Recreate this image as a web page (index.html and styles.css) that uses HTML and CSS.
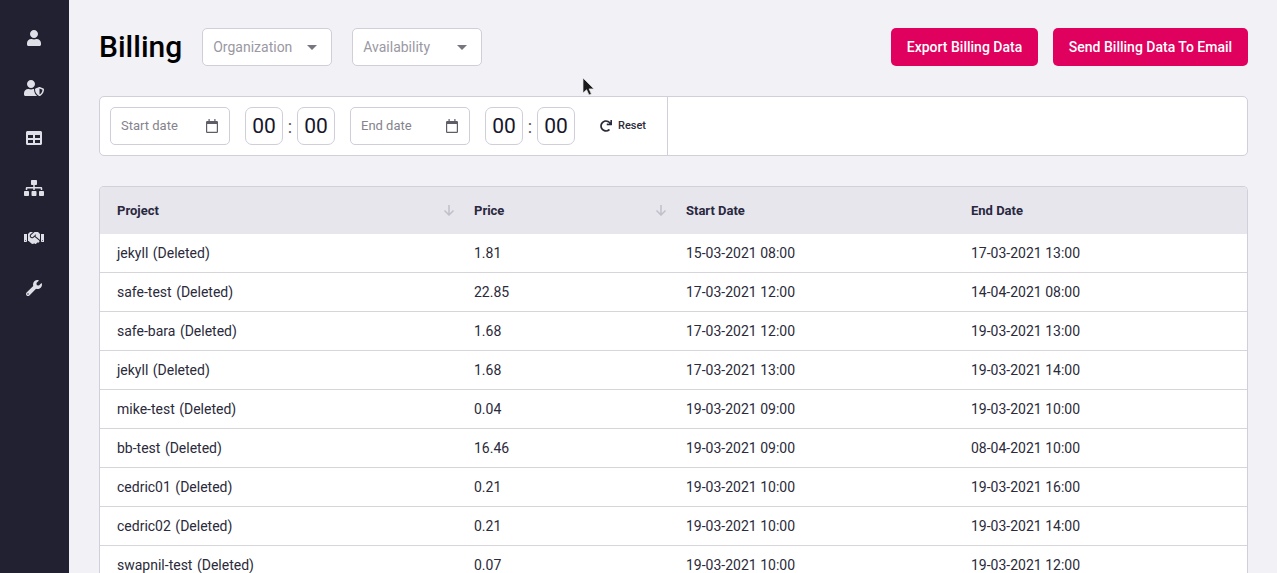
FILE: index.html

```html
<!DOCTYPE html>
<html>
  <head>
    <title>Billing</title>
    <link rel="stylesheet" href="styles.css">
  </head>
  <body>
    <div class="app">
      <nav class="sidebar">
        <a class="nav-item"><svg class="icon-user" viewBox="0 0 448 512"><path d="M224 256c70.7 0 128-57.3 128-128S294.7 0 224 0 96 57.3 96 128s57.3 128 128 128zm89.6 32h-16.7c-22.2 10.2-46.9 16-72.9 16s-50.6-5.8-72.9-16h-16.7C60.2 288 0 348.2 0 422.4V464c0 26.5 21.5 48 48 48h352c26.5 0 48-21.5 48-48v-41.6c0-74.2-60.2-134.4-134.4-134.4z"/></svg></a>
        <a class="nav-item"><svg class="icon-wide" viewBox="0 0 640 512"><path d="M622.3 271.1l-115.2-45c-4.1-1.6-12.6-3.7-22.2 0l-115.2 45c-10.7 4.2-17.7 14-17.7 24.9 0 111.6 68.7 188.8 132.9 213.9 9.6 3.7 18 1.6 22.2 0C558.4 489.9 640 420.5 640 296c0-10.9-7-20.7-17.7-24.9zM496 462.4V273.3l95.5 37.3c-5.6 87.1-60.9 135.4-95.5 151.8zM224 256c70.7 0 128-57.3 128-128S294.7 0 224 0 96 57.3 96 128s57.3 128 128 128zm96 40c0-2.5.8-4.8 1.1-7.2-2.5-.1-4.9-.8-7.5-.8h-16.7c-22.2 10.2-46.9 16-72.9 16s-50.6-5.8-72.9-16h-16.7C60.2 288 0 348.2 0 422.4V464c0 26.5 21.5 48 48 48h352c6.8 0 13.3-1.5 19.2-4-54-42.9-99.2-116.7-99.2-212z"/></svg></a>
        <a class="nav-item"><svg class="icon-square" viewBox="0 0 512 512"><path d="M464 32H48C21.49 32 0 53.49 0 80v352c0 26.51 21.49 48 48 48h416c26.51 0 48-21.49 48-48V80c0-26.51-21.49-48-48-48zM224 416H64v-96h160v96zm0-160H64v-96h160v96zm224 160H288v-96h160v96zm0-160H288v-96h160v96z"/></svg></a>
        <a class="nav-item"><svg class="icon-wide" viewBox="0 0 640 512"><path d="M128 352H32c-17.67 0-32 14.33-32 32v96c0 17.67 14.33 32 32 32h96c17.67 0 32-14.33 32-32v-96c0-17.67-14.33-32-32-32zm-24-80h192v48h48v-48h192v48h48v-57.59c0-21.17-17.23-38.41-38.41-38.41H344v-64h40c17.67 0 32-14.33 32-32V32c0-17.67-14.33-32-32-32H256c-17.67 0-32 14.33-32 32v96c0 17.67 14.33 32 32 32h40v64H94.41C73.23 224 56 241.23 56 262.41V320h48v-48zm264 80h-96c-17.67 0-32 14.33-32 32v96c0 17.67 14.33 32 32 32h96c17.67 0 32-14.33 32-32v-96c0-17.67-14.33-32-32-32zm240 0h-96c-17.67 0-32 14.33-32 32v96c0 17.67 14.33 32 32 32h96c17.67 0 32-14.33 32-32v-96c0-17.67-14.33-32-32-32z"/></svg></a>
        <a class="nav-item"><svg class="icon-wide" viewBox="0 0 640 512"><path d="M434.7 64h-85.9c-8 0-15.7 3-21.6 8.4l-98.3 90c-.1.1-.2.3-.3.4-16.6 15.6-16.3 40.5-2.1 56 12.7 13.9 39.4 17.6 56.1 2.7.1-.1.3-.1.4-.2l79.9-73.2c6.5-5.9 16.7-5.5 22.6 1 6 6.5 5.5 16.6-1 22.6l-26.1 23.9L504 313.8c2.9 2.4 5.5 5 7.9 7.7V128l-54.6-54.6c-5.9-6-14.1-9.4-22.6-9.4zM544 128.2v223.9c0 17.7 14.3 32 32 32h64V128.2h-96zm48 223.9c-8.8 0-16-7.2-16-16s7.2-16 16-16 16 7.2 16 16-7.2 16-16 16zM0 384h64c17.7 0 32-14.3 32-32V128.2H0V384zm48-63.9c8.8 0 16 7.2 16 16s-7.2 16-16 16-16-7.2-16-16c0-8.9 7.2-16 16-16zm435.9 18.6L334.6 217.5l-30 27.5c-29.7 27.1-75.2 24.5-101.7-4.4-26.9-29.4-24.8-74.9 4.4-101.7L289.1 64h-83.8c-8.5 0-16.6 3.4-22.6 9.4L128 128v223.9h18.3l90.5 81.9c27.4 22.3 67.7 18.1 90-9.3l.2-.2 17.9 15.5c15.9 13 39.4 10.5 52.3-5.4l31.4-38.6 5.4 4.4c13.7 11.1 33.9 9.1 45-4.7l9.5-11.7c11.2-13.8 9.1-33.9-4.6-45.1z"/></svg></a>
        <a class="nav-item"><svg class="icon-square" viewBox="0 0 512 512"><path d="M507.73 109.1c-2.24-9.03-13.54-12.09-20.12-5.51l-74.36 74.36-67.88-11.31-11.31-67.88 74.36-74.36c6.62-6.62 3.43-17.9-5.66-20.16-47.38-11.74-99.55.91-136.58 37.93-39.64 39.64-50.55 97.1-34.05 147.2L18.74 402.76c-24.99 24.99-24.99 65.51 0 90.5 24.99 24.99 65.51 24.99 90.5 0l213.21-213.21c50.12 16.71 107.47 5.68 147.37-34.22 37.07-37.07 49.7-89.32 37.91-136.73zM64 472c-13.25 0-24-10.75-24-24 0-13.26 10.75-24 24-24s24 10.74 24 24c0 13.25-10.75 24-24 24z"/></svg></a>
      </nav>

      <main class="content">
        <div class="page-head">
          <h1 class="page-title">Billing</h1>
          <div class="select"><span>Organization</span><i class="caret"></i></div>
          <div class="select"><span>Availability</span><i class="caret"></i></div>
          <div class="actions">
            <button class="btn btn-export">Export Billing Data</button>
            <button class="btn btn-send">Send Billing Data To Email</button>
          </div>
        </div>

        <div class="filters">
          <div class="filters-left">
            <div class="date-input"><span>Start date</span>
              <svg viewBox="0 0 12 14"><path class="fill" d="M2.500 0h1.200v2h4.600V0h1.200v2h1.300A1.200 1.200 0 0 1 12 3.200v9.600a1.200 1.200 0 0 1-1.200 1.200H1.200A1.200 1.200 0 0 1 0 12.800V3.200A1.200 1.200 0 0 1 1.200 2h1.300zM1.200 5v7.800h9.600V5z"/></svg>
            </div>
            <div class="time"><span class="time-box">00</span><span class="colon">:</span><span class="time-box">00</span></div>
            <div class="date-input"><span>End date</span>
              <svg viewBox="0 0 12 14"><path class="fill" d="M2.500 0h1.200v2h4.600V0h1.200v2h1.300A1.200 1.200 0 0 1 12 3.200v9.600a1.200 1.200 0 0 1-1.200 1.200H1.200A1.200 1.200 0 0 1 0 12.800V3.200A1.200 1.200 0 0 1 1.200 2h1.300zM1.200 5v7.800h9.600V5z"/></svg>
            </div>
            <div class="time"><span class="time-box">00</span><span class="colon">:</span><span class="time-box">00</span></div>
            <a class="reset">
              <svg viewBox="0 0 512 512"><path d="M500.33 0h-47.41a12 12 0 0 0-12 12.57l4 82.76A247.42 247.42 0 0 0 256 8C119.34 8 7.900 119.530 8 256.190 8.100 393.070 119.100 504 256 504a247.100 247.100 0 0 0 166.180-63.910 12 12 0 0 0 .48-17.430l-34-34a12 12 0 0 0-16.380-.55A176 176 0 1 1 402.100 157.800l-101.530-4.870a12 12 0 0 0-12.570 12v47.410a12 12 0 0 0 12 12h200.330a12 12 0 0 0 12-12V12a12 12 0 0 0-12-12z"/></svg>
              <span>Reset</span>
            </a>
          </div>
        </div>

        <div class="table-wrap">
          <table class="billing">
            <colgroup><col class="col-project"><col class="col-price"><col class="col-start"><col></colgroup>
            <thead>
              <tr>
                <th>Project<svg class="sort" viewBox="0 0 12 12"><path d="M6 1v10M1.500 6.500 6 11l4.500-4.500"/></svg></th>
                <th>Price<svg class="sort" viewBox="0 0 12 12"><path d="M6 1v10M1.500 6.500 6 11l4.500-4.500"/></svg></th>
                <th>Start Date</th>
                <th>End Date</th>
              </tr>
            </thead>
            <tbody>
              <tr><td>jekyll <span class="tag">(Deleted)</span></td><td>1.81</td><td>15-03-2021 08:00</td><td>17-03-2021 13:00</td></tr>
              <tr><td>safe-test <span class="tag">(Deleted)</span></td><td>22.85</td><td>17-03-2021 12:00</td><td>14-04-2021 08:00</td></tr>
              <tr><td>safe-bara <span class="tag">(Deleted)</span></td><td>1.68</td><td>17-03-2021 12:00</td><td>19-03-2021 13:00</td></tr>
              <tr><td>jekyll <span class="tag">(Deleted)</span></td><td>1.68</td><td>17-03-2021 13:00</td><td>19-03-2021 14:00</td></tr>
              <tr><td>mike-test <span class="tag">(Deleted)</span></td><td>0.04</td><td>19-03-2021 09:00</td><td>19-03-2021 10:00</td></tr>
              <tr><td>bb-test <span class="tag">(Deleted)</span></td><td>16.46</td><td>19-03-2021 09:00</td><td>08-04-2021 10:00</td></tr>
              <tr><td>cedric01 <span class="tag">(Deleted)</span></td><td>0.21</td><td>19-03-2021 10:00</td><td>19-03-2021 16:00</td></tr>
              <tr><td>cedric02 <span class="tag">(Deleted)</span></td><td>0.21</td><td>19-03-2021 10:00</td><td>19-03-2021 14:00</td></tr>
              <tr><td>swapnil-test <span class="tag">(Deleted)</span></td><td>0.07</td><td>19-03-2021 10:00</td><td>19-03-2021 12:00</td></tr>
            </tbody>
          </table>
        </div>
      </main>
    </div>
    <svg class="cursor" viewBox="0 0 13 20"><path d="M1 1v15l3.600-3.300L7 18l2.400-1-2.300-5.100H12z"/></svg>
  </body>
</html>
```

FILE: styles.css

```css
* {box-sizing: border-box;}
html, body {margin: 0; height: 100%; overflow: hidden;}
body {font-family: Roboto, "Liberation Sans", sans-serif; font-size: 14px; color: #2b2a3a; background: #f1f1f6;}

.app {display: flex; height: 573px; overflow: hidden;}

/* sidebar */
.sidebar {width: 69px; flex: none; background: #212132; padding: 13px 1px 0 0;}
.nav-item {display: flex; align-items: center; justify-content: center; height: 50px;}
.nav-item svg {fill: #dfdfe7; height: 16px;}
.icon-user {width: 14px;}
.icon-wide {width: 20px;}
.icon-square {width: 16px;}

.content {flex: 1; min-width: 0; padding: 28px 29px 0 30px;}

/* top row */
.page-head {display: flex; align-items: center; gap: 20px; height: 38px;}
.page-title {margin: 0; font-size: 30px; font-weight: 500; color: #000; line-height: 38px;}
.select {display: flex; align-items: center; justify-content: space-between; width: 130px; height: 38px; padding: 0 14px 0 10px;
  background: #fff; border: 1px solid #cfced9; border-radius: 5px; color: #9a98a3; font-size: 14px;}
.caret {width: 0; height: 0; border-left: 5px solid transparent; border-right: 5px solid transparent; border-top: 5px solid #77757f;}
.actions {display: flex; gap: 15px; margin-left: auto;}
.btn {height: 38px; padding: 0; border: none; border-radius: 5px; background: #e0005e; color: #fff;
  font-family: inherit; font-size: 14px; font-weight: 500;}
.btn-export {width: 147px;}
.btn-send {width: 195px;}

/* date filters */
.filters {height: 60px; margin-top: 30px; background: #fff; border: 1px solid #d0cfda; border-radius: 5px;}
.filters-left {display: flex; align-items: center; gap: 15px; width: 568px; height: 100%; padding-left: 10px; border-right: 1px solid #d0cfda;}
.date-input {display: flex; align-items: center; justify-content: space-between; width: 120px; height: 38px; padding: 0 11px 0 10px;
  border: 1px solid #cfced9; border-radius: 5px; font-size: 13px; color: #85838d;}
.date-input span {padding-bottom: 2px;}
.date-input svg {width: 12px; height: 14px; margin-bottom: 1px; fill: #5f5d68;}
.time {display: flex; align-items: center;}
.time-box {width: 38px; height: 38px; line-height: 36px; text-align: center; border: 1px solid #cfced9; border-radius: 7px;
  font-size: 21px; color: #17162a;}
.colon {width: 14px; text-align: center; font-size: 18px; color: #55535e;}
.reset {display: flex; align-items: center; gap: 6px; margin-left: 10px; font-size: 11px; font-weight: 500; color: #2b2a3a;}
.reset span {padding-bottom: 2px;}
.reset svg {width: 12px; height: 12px; fill: #2b2a3a;}

/* table */
.table-wrap {margin-top: 30px; background: #fff; border: 1px solid #d0cfda; border-bottom: none; border-radius: 5px 5px 0 0; overflow: hidden;}
.billing {width: 100%; table-layout: fixed; border-collapse: collapse;}
.col-project {width: 357px;}
.col-price {width: 212px;}
.col-start {width: 285px;}
.billing th {position: relative; height: 47px; padding: 0 0 0 17px; text-align: left; font-size: 13px; font-weight: 700; color: #2a2840; background: #e7e6ec;}
.billing td {height: 39px; padding: 0 0 0 17px; border-top: 1px solid #d6d6da; color: #2b2a3a;}
.billing tbody tr:first-child td {border-top: none; height: 38px;}
.tag {margin-left: 1px;}
.sort {position: absolute; right: 2px; top: 17px; width: 12px; height: 12px; fill: none; stroke: #c0bfca; stroke-width: 1.500;}

.cursor {position: absolute; left: 582px; top: 77px; width: 13px; height: 20px; fill: #1a1a1a; stroke: #e8e8e8; stroke-width: .7;}
```
